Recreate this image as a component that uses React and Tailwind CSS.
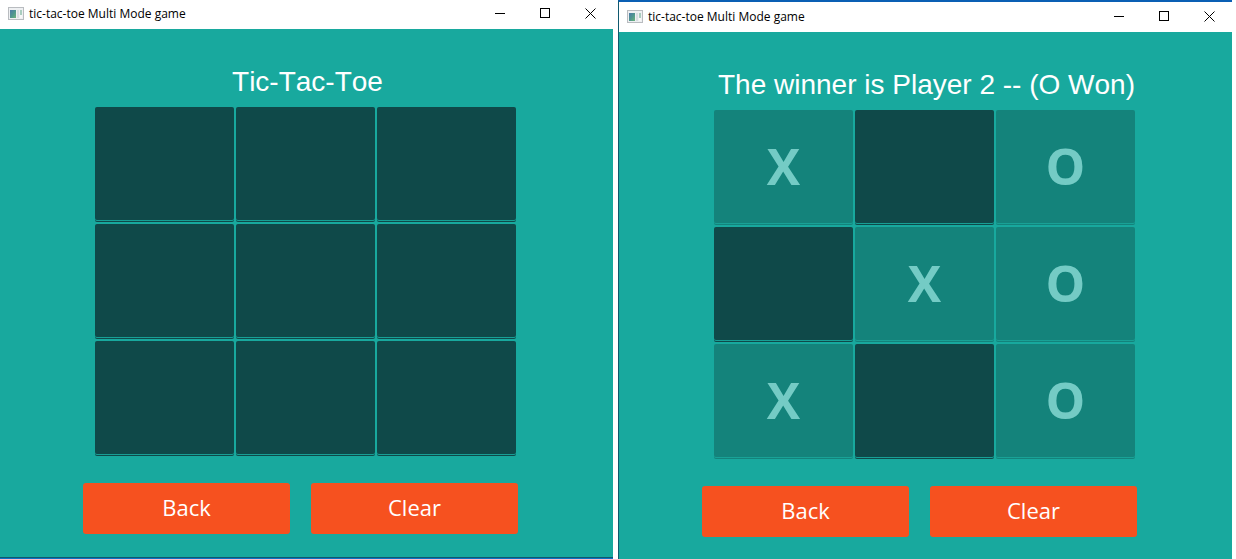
import React from "react";

const EMPTY_BOARD = ["", "", "", "", "", "", "", "", ""];
const FINISHED_BOARD = ["X", "", "O", "", "X", "O", "X", "", "O"];

function AppIcon() {
  return (
    <svg width="16" height="13" viewBox="0 0 16 13" aria-hidden="true" className="shrink-0">
      <defs>
        <linearGradient id="pane" x1="0" y1="0" x2="1" y2="1">
          <stop offset="0" stopColor="#4d79a8" />
          <stop offset="0.5" stopColor="#4e9590" />
          <stop offset="1" stopColor="#6cb37a" />
        </linearGradient>
      </defs>
      <rect x="0.5" y="0.5" width="15" height="12" fill="#eef0f2" stroke="#b9bcc0" />
      <rect x="2" y="3" width="6" height="8" fill="url(#pane)" />
      <rect x="9" y="3" width="2" height="8" fill="#d9dde2" />
      <rect x="12" y="3" width="2" height="5" fill="#a9cdbf" />
      <rect x="12" y="8" width="2" height="3" fill="#f8f8f8" />
    </svg>
  );
}

function WindowButton({ label, children }) {
  return (
    <button type="button" aria-label={label} className="flex h-full w-[45px] items-center justify-center">
      <svg width="11" height="11" viewBox="0 0 11 11" fill="none" stroke="#000" aria-hidden="true">
        {children}
      </svg>
    </button>
  );
}

function TitleBar({ className }) {
  return (
    <header className={`flex items-center bg-white pl-2 ${className}`}>
      <AppIcon />
      <span className="ml-[5px] pt-[2px] font-['Open_Sans','Noto_Sans',sans-serif] text-[12px] leading-4 text-black">
        tic-tac-toe Multi Mode game
      </span>
      <div className="ml-auto flex h-full">
        <WindowButton label="Minimize">
          <path d="M0 5.5h10" />
        </WindowButton>
        <WindowButton label="Maximize">
          <rect x="0.5" y="0.5" width="9" height="9" />
        </WindowButton>
        <WindowButton label="Close">
          <path d="M0.5 0.5l10 10M10.5 0.5l-10 10" />
        </WindowButton>
      </div>
    </header>
  );
}

function Cell({ mark, index }) {
  const colors = mark
    ? "bg-[#14837b] shadow-[0_1px_0_#19a297,0_2px_0_#14837b]"
    : "bg-[#0f4949] shadow-[0_1px_0_#189f95,0_2px_0_#0f4949]";
  return (
    <button
      type="button"
      aria-label={`Square ${index + 1}`}
      disabled={Boolean(mark)}
      className={`mb-[2px] flex h-[113px] items-center justify-center rounded-[2px] pb-[2px] font-['Open_Sans','Noto_Sans',sans-serif] text-[50px] leading-none font-bold text-[#74cbc5] ${colors}`}
    >
      {mark}
    </button>
  );
}

function ActionButton({ children }) {
  return (
    <button
      type="button"
      className="h-[51px] w-[207px] rounded-[3px] bg-[#f6511f] pb-[3px] font-['Open_Sans','Noto_Sans',sans-serif] text-[22px] leading-none text-white"
    >
      {children}
    </button>
  );
}

function GameWindow({ message, board, frame, bar }) {
  return (
    <section className={`flex min-w-0 flex-col bg-[#18a99e] ${frame}`}>
      <TitleBar className={bar} />
      <main className="flex flex-1 flex-col items-center pt-[35px]">
        <h1 className="pl-[2px] font-['Liberation_Sans',Arial,sans-serif] text-[28px] leading-9 text-white [font-kerning:none]">
          {message}
        </h1>
        <div className="mt-[7px] pr-[2px]">
          <div className="grid grid-cols-[139px_139px_139px] gap-[2px]">
            {board.map((mark, i) => (
              <Cell key={i} index={i} mark={mark} />
            ))}
          </div>
        </div>
        <div className="mt-[27px] flex gap-[21px] pr-3">
          <ActionButton>Back</ActionButton>
          <ActionButton>Clear</ActionButton>
        </div>
      </main>
    </section>
  );
}

export default function App() {
  return (
    <div className="grid min-h-screen grid-cols-[613fr_614fr] gap-[5px] bg-white pr-1">
      <GameWindow
        message="Tic-Tac-Toe"
        board={EMPTY_BOARD}
        frame="border-b border-[#0a72c4] shadow-[inset_0_-1px_0_#10596f]"
        bar="h-[29px] pb-[3px]"
      />
      <GameWindow
        message="The winner is Player 2 -- (O Won)"
        board={FINISHED_BOARD}
        frame="border-t-2 border-l border-t-[#0a5fb4] border-l-[#10596f]"
        bar="h-[30px] pb-[2px]"
      />
    </div>
  );
}
